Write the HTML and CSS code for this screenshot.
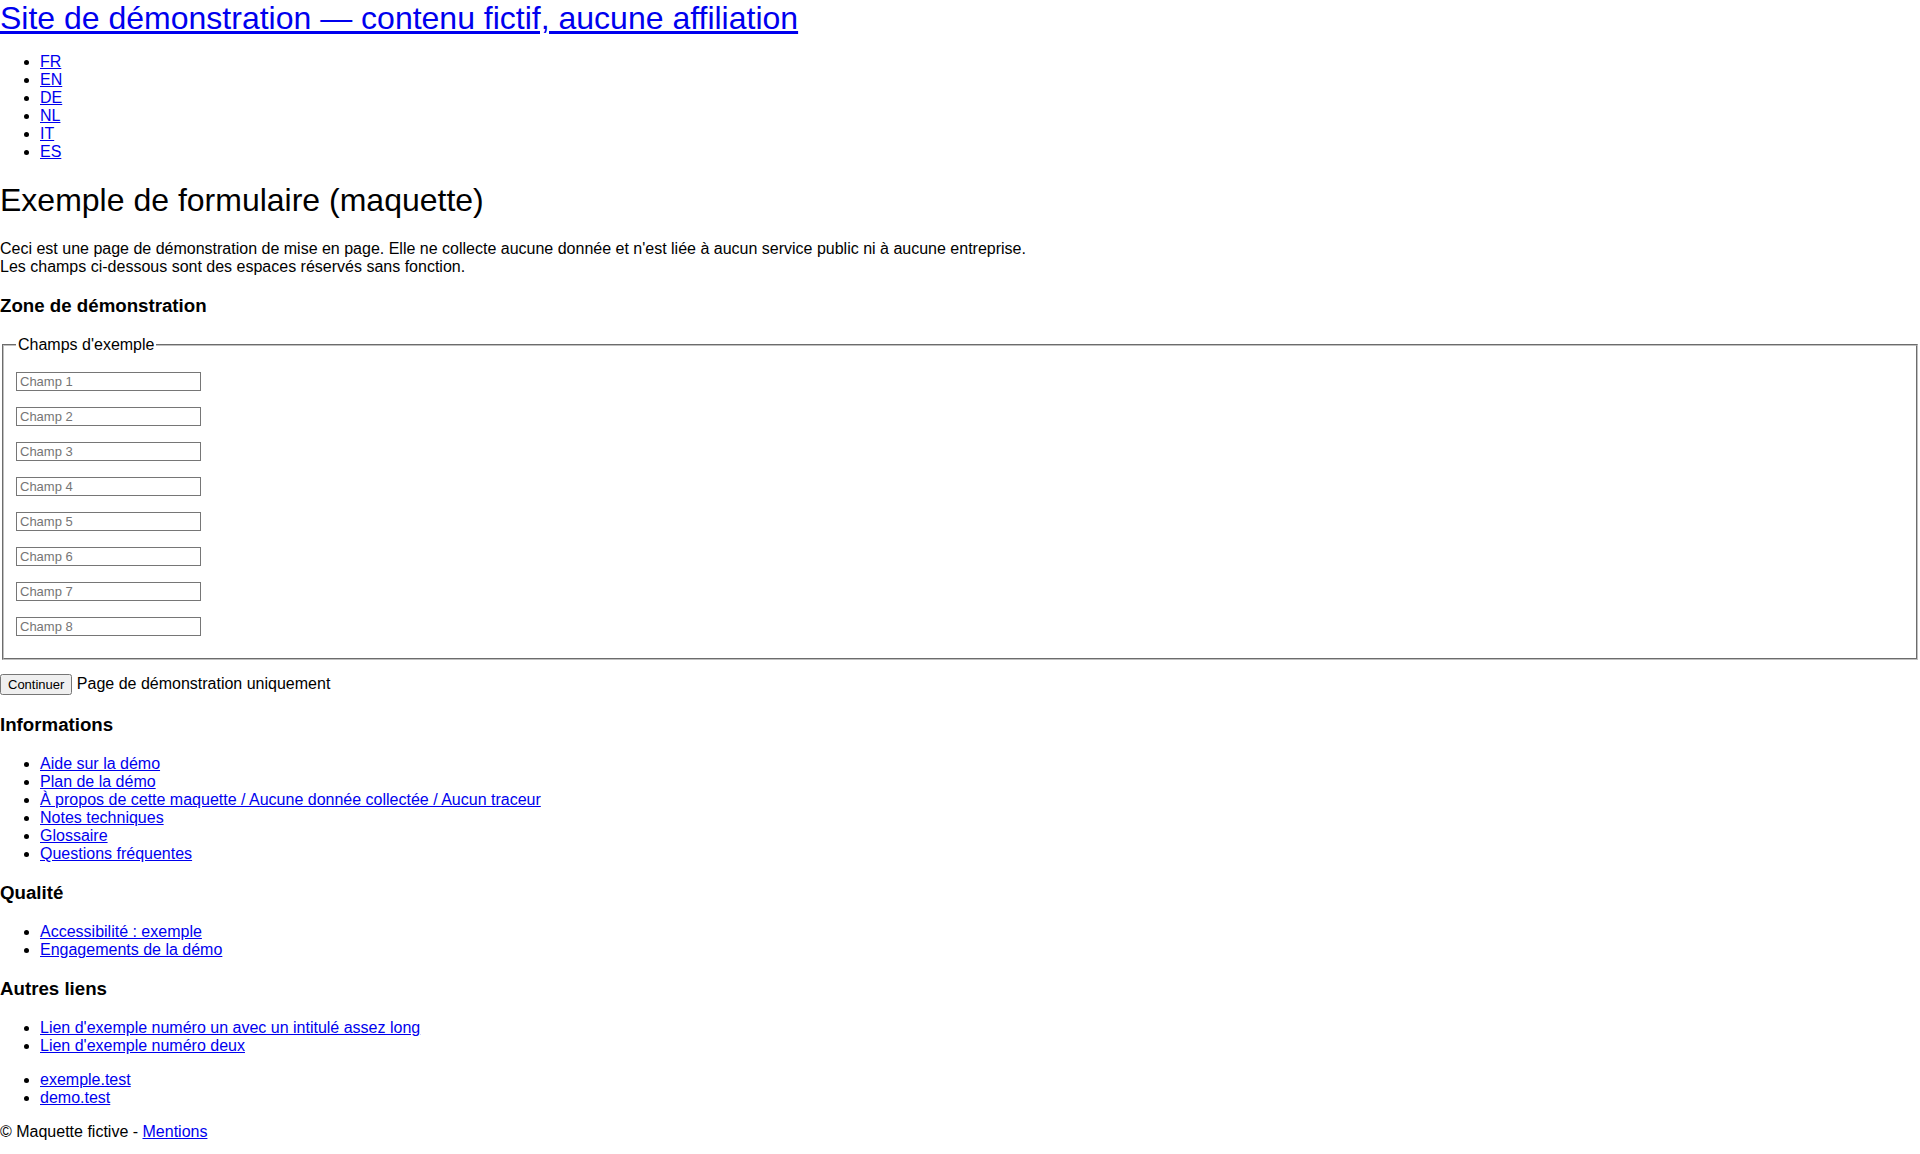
FILE: index.html
```html
<!DOCTYPE html>
<html lang="fr">
<head>
<meta charset="utf-8">
<title>Démo de mise en page (contenu fictif)</title>
<link rel="stylesheet" href="styles.css">
</head>
<body>
<header class="site-header">
  <a class="brand" href="#">Site de démonstration — contenu fictif, aucune affiliation</a>
  <ul class="langs">
    <li><a href="#">FR</a></li>
    <li><a href="#">EN</a></li>
    <li><a href="#">DE</a></li>
    <li><a href="#">NL</a></li>
    <li><a href="#">IT</a></li>
    <li><a href="#">ES</a></li>
  </ul>
</header>
<main>
  <h1 class="title">Exemple de formulaire (maquette)</h1>
  <p class="intro">Ceci est une page de démonstration de mise en page. Elle ne collecte aucune donnée et n'est liée à aucun service public ni à aucune entreprise.<br>Les champs ci-dessous sont des espaces réservés sans fonction.</p>
  <h2 class="section">Zone de démonstration</h2>
  <form class="demo-form" onsubmit="return false">
    <fieldset class="box">
      <legend>Champs d'exemple</legend>
      <div class="fields">
        <input type="text" placeholder="Champ 1" disabled>
        <input type="text" placeholder="Champ 2" disabled>
        <input type="text" placeholder="Champ 3" disabled>
        <input type="text" placeholder="Champ 4" disabled>
        <input type="text" placeholder="Champ 5" disabled>
        <input type="text" placeholder="Champ 6" disabled>
        <input type="text" placeholder="Champ 7" disabled>
        <input type="text" placeholder="Champ 8" disabled>
      </div>
    </fieldset>
    <div class="actions"><button type="button">Continuer</button> Page de démonstration uniquement</div>
  </form>
  <h2 class="section">Informations</h2>
  <ul class="links">
    <li><a href="#">Aide sur la démo</a></li>
    <li><a href="#">Plan de la démo</a></li>
    <li><a href="#">À propos de cette maquette / Aucune donnée collectée / Aucun traceur</a></li>
    <li><a href="#">Notes techniques</a></li>
    <li><a href="#">Glossaire</a></li>
    <li><a href="#">Questions fréquentes</a></li>
  </ul>
  <h2 class="section">Qualité</h2>
  <ul class="links">
    <li><a href="#">Accessibilité : exemple</a></li>
    <li><a href="#">Engagements de la démo</a></li>
  </ul>
  <h2 class="section">Autres liens</h2>
  <ul class="links">
    <li><a href="#">Lien d'exemple numéro un avec un intitulé assez long</a></li>
    <li><a href="#">Lien d'exemple numéro deux</a></li>
  </ul>
  <ul class="links">
    <li><a href="#">exemple.test</a></li>
    <li><a href="#">demo.test</a></li>
  </ul>
</main>
<footer class="foot">© Maquette fictive - <a href="#">Mentions</a></footer>
</body>
</html>
```
FILE: styles.css
```css
body {
  margin: 0;
  font-family: "Liberation Sans", Arial, sans-serif;
  font-size: 16px;
  color: #000;
  background: #fff;
}
a { color: #0000ee; }
.brand {
  display: inline-block;
  font-size: 32px;
  line-height: 37px;
}
.langs {
  margin: 16px 0;
  padding-left: 40px;
  line-height: 18px;
}
.title {
  font-size: 32px;
  font-weight: normal;
  margin: 21px 0;
}
.intro {
  margin: 16px 0;
  line-height: 18px;
}
.section {
  font-size: 18.7px;
  font-weight: bold;
  margin: 19px 0;
}
.box {
  margin: 0 2px;
  padding: 6px 12px 12px;
  border: 2px groove #c0c0c0;
}
.box legend {
  padding: 0 2px;
}
.fields {
  display: flex;
  flex-direction: column;
  align-items: flex-start;
  gap: 16px;
  padding: 12px 0 10px;
}
.fields input {
  width: 177px;
  height: 15px;
  font: 13px "Liberation Sans", Arial, sans-serif;
  padding: 1px 3px;
  border: 1px solid #767676;
  background: #fff;
}
.actions {
  margin-top: 14px;
}
.actions button {
  font: 13px "Liberation Sans", Arial, sans-serif;
  padding: 1px 6px;
}
.links {
  margin: 16px 0;
  padding-left: 40px;
  line-height: 18px;
}
.foot {
  margin: 16px 0 8px;
}
```
